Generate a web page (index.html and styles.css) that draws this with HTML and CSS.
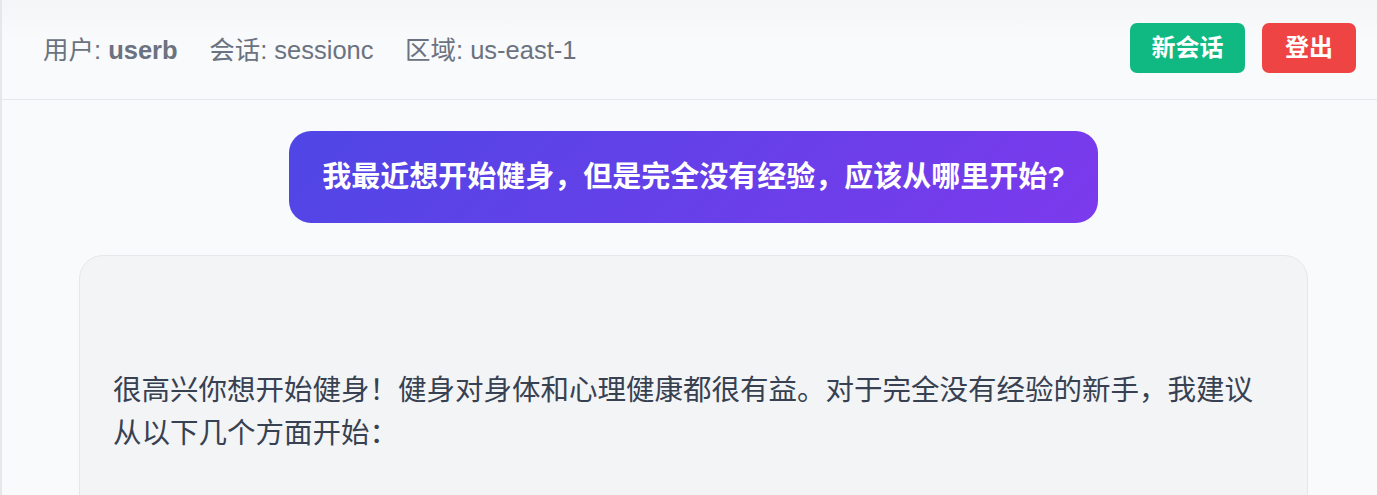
FILE: index.html
```html
<!DOCTYPE html>
<html>
	<head>
		<meta charset="UTF-8">
		<meta name="viewport" content="width=device-width, initial-scale=1.0" />
		<title>健身助手</title>
		<link rel="stylesheet" href="styles.css">
	</head>
	<body>
		<div class="app">
			<div class="topbar">
				<div class="info">
					<span>用户: <b>userb</b></span>
					<span>会话: sessionc</span>
					<span>区域: us-east-1</span>
				</div>
				<div class="actions">
					<a class="btn btn-new">新会话</a>
					<a class="btn btn-out">登出</a>
				</div>
			</div>
			<div class="chat">
				<div class="msg-user">我最近想开始健身，但是完全没有经验，应该从哪里开始?</div>
				<div class="msg-bot">
					<p>很高兴你想开始健身！健身对身体和心理健康都很有益。对于完全没有经验的新手，我建议从以下几个方面开始：</p>
				</div>
			</div>
		</div>
	</body>
</html>
```
FILE: styles.css
```css
body{margin:0;padding:0;background:#f9fafb;font-family:"Liberation Sans","Noto Sans CJK SC",sans-serif;overflow:hidden;}
.app{border-left:2px solid #e5e7eb;min-height:495px;}

.topbar{display:flex;align-items:center;justify-content:space-between;height:95px;padding:0 21px 4px 41px;border-bottom:1px solid #e5e7eb;background:linear-gradient(#f4f5f7,#f9fafb 40%);}
.info{display:flex;gap:31.5px;font-size:25.5px;color:#6b7280;}
.info b{font-weight:700;color:#6b7280;}
.actions{display:flex;gap:17px;}
.btn{display:block;height:50px;line-height:50px;border-radius:7px;font-size:24px;font-weight:700;color:#fff;}
.btn-new{background:#10b981;padding:0 21.5px;}
.btn-out{background:#ef4444;padding:0 23px;}

.chat{display:flex;flex-direction:column;align-items:center;gap:32px;padding:31px 69px 0 77px;}
.msg-user{padding:24.5px 33px;border-radius:22px;background:linear-gradient(135deg,#4f46e5,#7c3aed);color:#fff;font-size:29px;line-height:43px;font-weight:700;}
.msg-bot{align-self:stretch;background:#f3f4f6;border:1px solid #e5e7eb;border-radius:24px;padding:33px 33px 80px;font-size:28.5px;line-height:42.75px;color:#374151;}
.msg-bot p{margin:80px 0 0;}
```
